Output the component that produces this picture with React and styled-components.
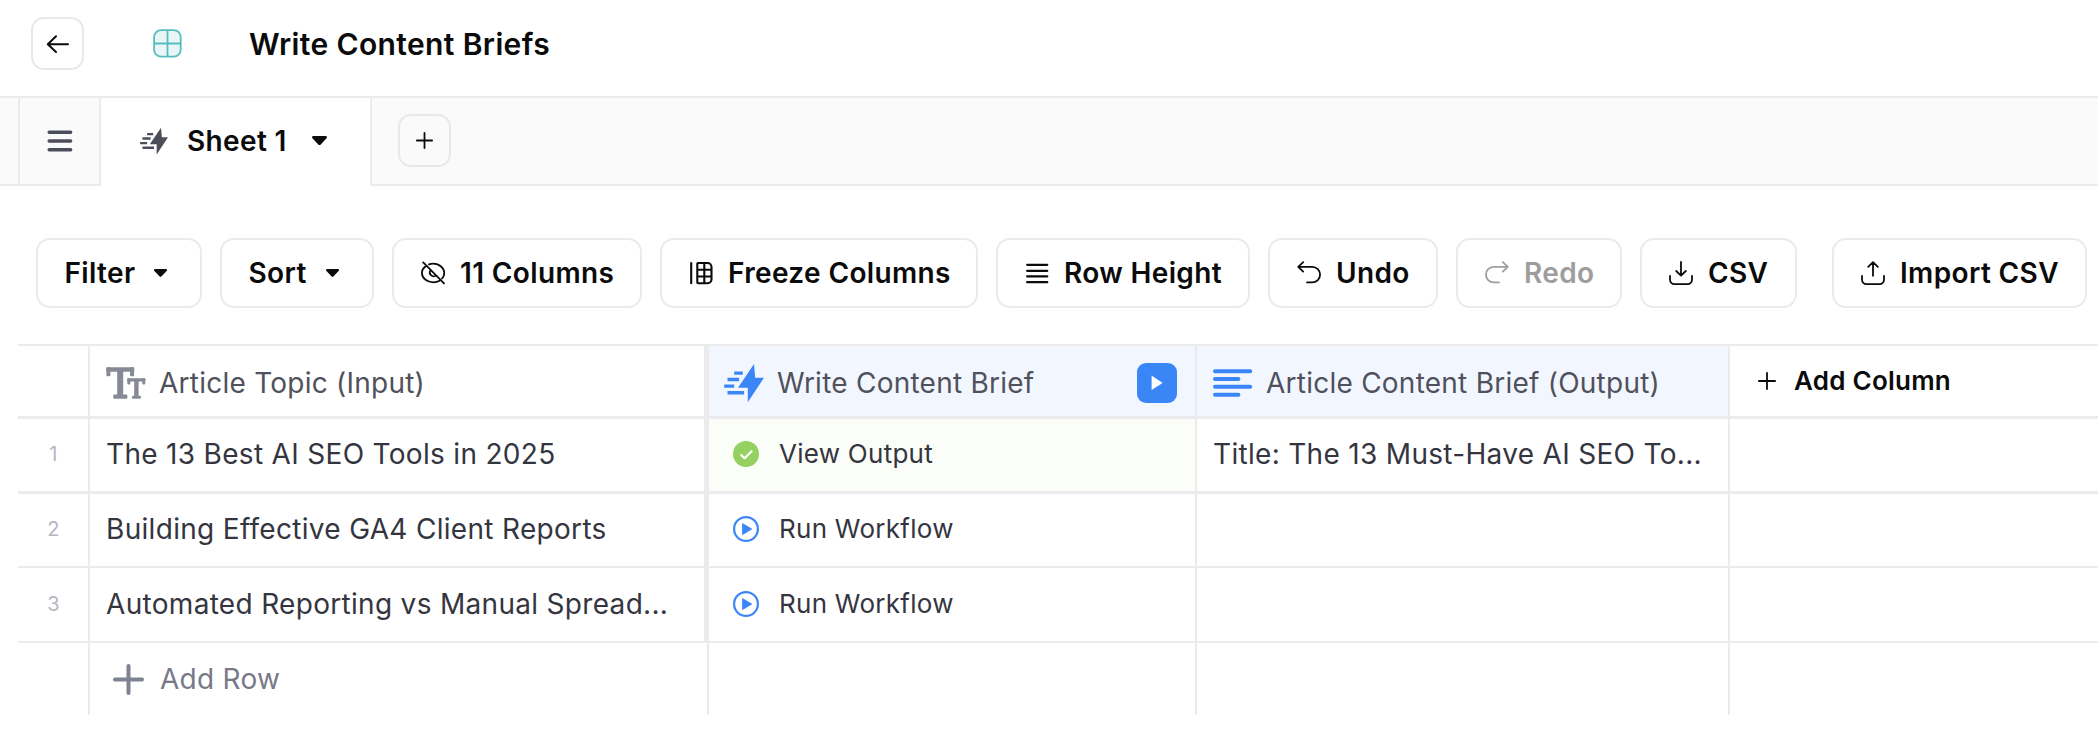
import React from "react";
import styled, { createGlobalStyle } from "styled-components";

const LINE = "#ebebed";
const BLUE = "#3b86f7";

const Global = createGlobalStyle`
  * { box-sizing: border-box; }
  body {
    margin: 0;
    background: #fff;
    color: #0b0b0c;
    font-family: Inter, "Liberation Sans", sans-serif;
  }
  svg { display: block; flex: none; }
  button { font: inherit; color: inherit; background: none; margin: 0; cursor: pointer; }
`;

const Page = styled.div`
  height: 744px;
  overflow: hidden;
  background: #fff;
`;

/* Header */
const Header = styled.header`
  display: flex;
  align-items: center;
  height: 98px;
  padding: 0 0 9px 31px;
  border-bottom: 2px solid ${LINE};
`;
const SquareButton = styled.button`
  display: flex;
  align-items: center;
  justify-content: center;
  width: 53px;
  height: 53px;
  padding: 0;
  border: 2px solid #e8e8e8;
  border-radius: 13px;
`;
const SheetLogo = styled.div`
  margin: 0 67px 0 69px;
`;
const Title = styled.h1`
  margin: 0;
  font-size: 30px;
  font-weight: 600;
  line-height: 36px;
  letter-spacing: 0.37px;
`;

/* Tabs */
const TabBar = styled.nav`
  display: flex;
  height: 88px;
`;
const TabEdge = styled.div`
  width: 20px;
  background: #fafafa;
  border-right: 2px solid ${LINE};
  border-bottom: 2px solid ${LINE};
`;
const MenuTab = styled.div`
  display: flex;
  align-items: center;
  justify-content: center;
  width: 81px;
  background: #fafafa;
  border-right: 2px solid ${LINE};
  border-bottom: 2px solid ${LINE};
`;
const ActiveTab = styled.div`
  display: flex;
  align-items: center;
  width: 269px;
  padding: 0 0 2px 39px;
`;
const TabName = styled.span`
  margin: 0 25px 0 19px;
  font-size: 28px;
  font-weight: 600;
  line-height: 34px;
  letter-spacing: 0.36px;
`;
const TabRest = styled.div`
  display: flex;
  flex: 1;
  align-items: center;
  padding: 0 0 1px 26px;
  background: #fafafa;
  border-left: 2px solid ${LINE};
  border-bottom: 2px solid ${LINE};
  border-bottom-left-radius: 3px;
`;

/* Toolbar */
const Toolbar = styled.div`
  display: flex;
  gap: 18px;
  padding: 52px 0 36px 36px;
`;
const ToolButton = styled.button`
  display: flex;
  flex: none;
  align-items: center;
  gap: ${(p) => (p.$menu ? 19 : 15)}px;
  width: ${(p) => p.$width}px;
  height: 70px;
  padding: 0 0 0 ${(p) => (p.$menu ? 26.5 : 27)}px;
  margin-left: ${(p) => (p.$apart ? 17 : 0)}px;
  border: 2px solid #ebebeb;
  border-radius: 14px;
  color: ${(p) => (p.disabled ? "#9d9d9d" : "#0b0b0c")};
  font-size: 28px;
  font-weight: 600;
  line-height: 34px;
  letter-spacing: 0.36px;
  white-space: nowrap;
`;

/* Table */
const Table = styled.div`
  margin-left: 18px;
  border-top: 2px solid ${LINE};
`;
const Row = styled.div`
  display: grid;
  grid-template-columns: 72px 619px 488px 533px 1fr;
  height: ${(p) => p.$height}px;
  border-bottom: ${(p) => p.$line ?? 2}px solid ${LINE};
`;
const Cell = styled.div`
  display: flex;
  align-items: center;
  min-width: 0;
  padding: 0 16px 2px ${(p) => p.$pad ?? 16}px;
  border-right: ${(p) => p.$divider ?? 2}px solid ${LINE};
  background: ${(p) => (p.$done ? "#fbfdf8" : "transparent")};
  color: #34353f;
  font-size: 28px;
  line-height: 34px;
  letter-spacing: 0.31px;
  white-space: nowrap;
`;
const NumberCell = styled(Cell)`
  justify-content: center;
  padding: 0 0 2px 1px;
  color: #b6b6c2;
  font-size: 20px;
`;
const StatusCell = styled(Cell)`
  gap: 20px;
  padding-left: 24px;
  font-size: 26px;
  letter-spacing: 0.27px;
`;
const HeadCell = styled(Cell)`
  gap: 13px;
  padding-top: 4px;
  padding-right: 18px;
  padding-bottom: 0;
  background: ${(p) => (p.$tint ? "#f2f7ff" : "transparent")};
  color: #50515c;
  letter-spacing: 0.24px;
`;
const RunButton = styled.button`
  display: flex;
  align-items: center;
  justify-content: center;
  width: 40px;
  height: 40px;
  margin-left: auto;
  padding: 0;
  border: 0;
  border-radius: 9px;
  background: ${BLUE};
`;
const AddColumn = styled.div`
  display: flex;
  align-items: center;
  gap: 18px;
  padding: 0 0 1px 28px;
  font-size: 26px;
  font-weight: 600;
  letter-spacing: 0.24px;
`;
const AddRow = styled(Cell)`
  gap: 16px;
  padding: 0 0 0 23px;
  color: #777988;
  letter-spacing: 0.27px;
`;

/* Icons */
const stroke = { fill: "none", stroke: "currentColor", strokeLinecap: "round", strokeLinejoin: "round" };

const BackIcon = () => (
  <svg width="24" height="20" viewBox="0 0 24 20" {...stroke} strokeWidth="2">
    <path d="M22 10.3H2M10 2.2L1.8 10.3L10 18" />
  </svg>
);
const GridIcon = () => (
  <svg width="29" height="29" viewBox="0 0 29 29" fill="#eaf6f6" stroke="#56bdbe" strokeWidth="1.8">
    <rect x="1.1" y="1.1" width="26.6" height="26.6" rx="7" />
    <path d="M14.5 1.1v26.6M1.1 14.5h26.6" />
  </svg>
);
const MenuIcon = () => (
  <svg width="26" height="22" viewBox="0 0 26 22" {...stroke} stroke="#4c4d5a" strokeWidth="3.5">
    <path d="M2.2 2.2h21.4M2.2 11h21.4M2.2 19.8h21.4" />
  </svg>
);
const BoltIcon = ({ size, color }) => (
  <svg width={size} height={size} viewBox="0 0 40 40" fill={color}>
    <path d="M30 1L31.2 14.7H40L23.8 39.3V24.8H14Z" />
    <path d="M10.2 8.4h8.6v3.4h-8.6zM3.5 14.8h11.6v3.4H3.5zM.2 21.4h10v3.4h-10zM3.5 28h16.6v3.4H3.5z" />
  </svg>
);
const Caret = ({ width }) => (
  <svg width={width} height={width * 0.62} viewBox="0 0 13 8" fill="currentColor">
    <path d="M1.2 0H11.8C12.9 0 13.4 1.2 12.6 2L7.6 7.3C7 8 6 8 5.4 7.3L.4 2C-.4 1.2 .1 0 1.2 0Z" />
  </svg>
);
const PlusIcon = ({ size, weight, color = "currentColor" }) => (
  <svg width={size} height={size} viewBox={`0 0 ${size} ${size}`} {...stroke} stroke={color} strokeWidth={weight}>
    <path d={`M${size / 2} ${weight / 2}V${size - weight / 2}M${weight / 2} ${size / 2}H${size - weight / 2}`} />
  </svg>
);
const ToolIcon = ({ children, weight = 1.8 }) => (
  <svg width="24" height="24" viewBox="0 0 24 24" {...stroke} strokeWidth={weight}>
    {children}
  </svg>
);
const HiddenIcon = () => (
  <ToolIcon>
    <path d="M2.2 1.4L23 22.4" />
    <path d="M8 3.4C9.3 2.9 10.7 2.7 12.2 2.7C18.5 2.7 23.3 7 23.3 12C23.3 14 22.5 15.9 21 17.5" />
    <path d="M4.4 5.6C2.2 7.2 .9 9.5 .9 12C.9 17.1 6 21.3 12.2 21.3C14.6 21.3 16.8 20.7 18.6 19.7" />
    <path d="M9.3 9.6A3.8 3.8 0 0 0 14.6 14.7" />
  </ToolIcon>
);
const FreezeIcon = () => (
  <ToolIcon weight={2.1}>
    <path d="M2.2 2V22.2" />
    <path d="M9 2H18.5A4 4 0 0 1 22.5 6V18.2A4 4 0 0 1 18.5 22.2H9A.7 .7 0 0 1 8.3 21.5V2.7A.7 .7 0 0 1 9 2ZM15.3 2V22.2M8.3 8.8H22.5M8.3 15.5H22.5" />
  </ToolIcon>
);
const RowsIcon = () => (
  <ToolIcon weight={2.3}>
    <path d="M2.2 3.8H22.2M2.2 9.8H22.2M2.2 15.4H22.2M2.2 21.2H22.2" />
  </ToolIcon>
);
const UndoIcon = () => (
  <ToolIcon>
    <path d="M6.2 1.2L1.2 5.8L6.2 10.6M1.2 5.8H15.3A7.8 7.8 0 0 1 15.3 21.4H10" />
  </ToolIcon>
);
const RedoIcon = () => (
  <ToolIcon>
    <path d="M17.8 1.2L22.8 5.8L17.8 10.6M22.8 5.8H8.7A7.8 7.8 0 0 0 8.7 21.4H14" />
  </ToolIcon>
);
const DownloadIcon = () => (
  <ToolIcon>
    <path d="M1 15V18.5A4.6 4.6 0 0 0 5.6 23.1H18.4A4.6 4.6 0 0 0 23 18.5V15M12 1V14.6M7.2 10L12 14.7L16.8 10" />
  </ToolIcon>
);
const UploadIcon = () => (
  <ToolIcon>
    <path d="M1 15V18.5A4.6 4.6 0 0 0 5.6 23.1H18.4A4.6 4.6 0 0 0 23 18.5V15M12 1.2V14.8M7.2 5.8L12 1.2L16.8 5.8" />
  </ToolIcon>
);
const TextSizeIcon = () => (
  <svg width="40" height="34" viewBox="0 0 40 34" fill="#868996">
    <rect x=".4" y="1.2" width="27.7" height="4.6" rx="1" />
    <rect x=".4" y="1.2" width="4" height="9" rx="1" />
    <rect x="24.1" y="1.2" width="4" height="9" rx="1" />
    <rect x="11.2" y="2" width="6" height="30" />
    <rect x="7.3" y="28.6" width="14" height="4.2" rx="1" />
    <rect x="21.3" y="12.2" width="18" height="3.2" rx=".8" />
    <rect x="21.3" y="12.2" width="3" height="6.2" rx=".8" />
    <rect x="36.3" y="12.2" width="3" height="6.2" rx=".8" />
    <rect x="28.2" y="13" width="4.4" height="19" />
    <rect x="26" y="29.8" width="8.8" height="3" rx=".8" />
  </svg>
);
const ParagraphIcon = () => (
  <svg width="40" height="30" viewBox="0 0 40 30" fill="none" stroke={BLUE} strokeWidth="4" strokeLinecap="round">
    <path d="M2 3.2H37.2M2 11H25.4M2 18.8H37.2M2 26.8H25.4" />
  </svg>
);
const PlayIcon = () => (
  <svg width="12" height="16" viewBox="0 0 12 16" fill="#fff">
    <path d="M.6 .6L11.6 8L.6 15Z" />
  </svg>
);
const DoneIcon = () => (
  <svg width="26" height="26" viewBox="0 0 26 26">
    <circle cx="13" cy="13" r="13" fill="#95d160" />
    <path d="M8.3 14L11.6 17.2L18.6 10.2" fill="none" stroke="#fff" strokeWidth="2.2" strokeLinecap="round" strokeLinejoin="round" />
  </svg>
);
const RunIcon = () => (
  <svg width="26" height="26" viewBox="0 0 26 26">
    <circle cx="13" cy="13" r="11.9" fill="none" stroke={BLUE} strokeWidth="2.2" />
    <path d="M9.5 7.6V18.6L18.8 13.1Z" fill={BLUE} stroke={BLUE} strokeWidth=".8" strokeLinejoin="round" />
  </svg>
);

const rows = [
  { topic: "The 13 Best AI SEO Tools in 2025", done: true, output: "Title: The 13 Must-Have AI SEO To...", height: 75, line: 3 },
  { topic: "Building Effective GA4 Client Reports", height: 74 },
  { topic: "Automated Reporting vs Manual Spread...", height: 75 },
];

export default function App() {
  return (
    <Page>
      <Global />
      <Header>
        <SquareButton><BackIcon /></SquareButton>
        <SheetLogo><GridIcon /></SheetLogo>
        <Title>Write Content Briefs</Title>
      </Header>
      <TabBar>
        <TabEdge />
        <MenuTab><MenuIcon /></MenuTab>
        <ActiveTab>
          <BoltIcon size={28} color="#4c4d5a" />
          <TabName>Sheet 1</TabName>
          <Caret width={15} />
        </ActiveTab>
        <TabRest>
          <SquareButton><PlusIcon size={17} weight={1.8} /></SquareButton>
        </TabRest>
      </TabBar>
      <Toolbar>
        <ToolButton $width={166} $menu>Filter<Caret width={13} /></ToolButton>
        <ToolButton $width={154} $menu>Sort<Caret width={13} /></ToolButton>
        <ToolButton $width={250}><HiddenIcon />11 Columns</ToolButton>
        <ToolButton $width={318}><FreezeIcon />Freeze Columns</ToolButton>
        <ToolButton $width={254}><RowsIcon />Row Height</ToolButton>
        <ToolButton $width={170}><UndoIcon />Undo</ToolButton>
        <ToolButton $width={166} disabled><RedoIcon />Redo</ToolButton>
        <ToolButton $width={157}><DownloadIcon />CSV</ToolButton>
        <ToolButton $width={255} $apart><UploadIcon />Import CSV</ToolButton>
      </Toolbar>
      <Table>
        <Row $height={73} $line={3}>
          <HeadCell />
          <HeadCell $divider={5}><TextSizeIcon />Article Topic (Input)</HeadCell>
          <HeadCell $tint $pad={15}>
            <BoltIcon size={40} color={BLUE} />
            Write Content Brief
            <RunButton><PlayIcon /></RunButton>
          </HeadCell>
          <HeadCell $tint><ParagraphIcon />Article Content Brief (Output)</HeadCell>
          <AddColumn><PlusIcon size={18} weight={1.8} />Add Column</AddColumn>
        </Row>
        {rows.map((row, i) => (
          <Row key={row.topic} $height={row.height} $line={row.line}>
            <NumberCell>{i + 1}</NumberCell>
            <Cell $divider={5}>{row.topic}</Cell>
            <StatusCell $done={row.done}>
              {row.done ? <DoneIcon /> : <RunIcon />}
              {row.done ? "View Output" : "Run Workflow"}
            </StatusCell>
            <Cell>{row.output}</Cell>
          </Row>
        ))}
        <Row $height={72} $line={0}>
          <Cell />
          <AddRow><PlusIcon size={31} weight={4} color="#7f8290" />Add Row</AddRow>
          <Cell />
          <Cell />
        </Row>
      </Table>
    </Page>
  );
}
